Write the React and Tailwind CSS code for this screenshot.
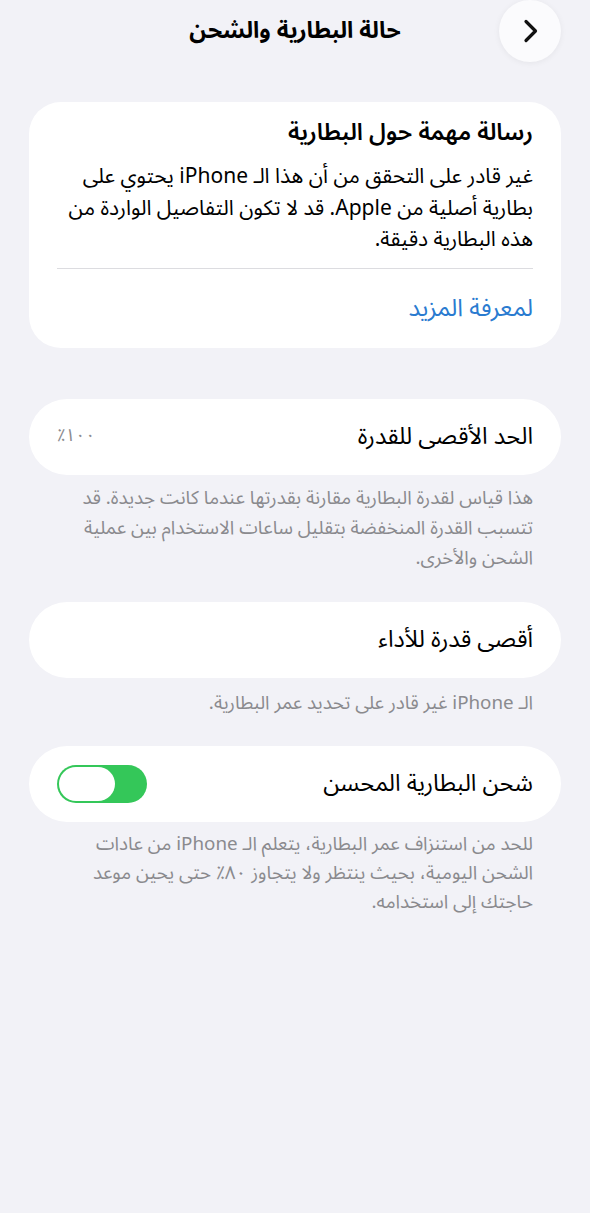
import React from 'react'

const font = { fontFamily: '"Noto Sans Arabic", "DejaVu Sans", "Noto Sans", sans-serif' }

function Header() {
  return (
    <div className="relative flex h-[62px] items-center justify-center">
      <h1 className="text-[23px] font-bold text-black">حالة البطارية والشحن</h1>
      <button className="absolute right-0 top-0 flex h-[62px] w-[62px] items-center justify-center rounded-full bg-[#fbfbfd] shadow-[0_1px_6px_rgba(0,0,0,0.06)]">
        <svg width="22" height="26" viewBox="0 0 22 26" fill="none">
          <path d="M7 3.5 L16.5 13 L7 22.5" stroke="#111" strokeWidth="3.2" strokeLinecap="round" strokeLinejoin="round" />
        </svg>
      </button>
    </div>
  )
}

function Lines({ lines, className }) {
  return (
    <div className={className}>
      {lines.map((l, i) => (
        <div key={i} className="whitespace-nowrap">{l}</div>
      ))}
    </div>
  )
}

function Row({ label, children }) {
  return (
    <div className="flex h-[76px] items-center justify-between rounded-[38px] bg-white px-[28px]">
      <span className="text-[23.5px] text-black">{label}</span>
      {children}
    </div>
  )
}

function Footnote({ lines, className }) {
  return (
    <Lines
      lines={lines}
      className={'px-[28px] text-[18.8px] text-[#8a8a8e] ' + (className || '')}
    />
  )
}

function Toggle() {
  return (
    <div className="flex h-[38px] w-[90px] items-center justify-start rounded-full bg-[#34c759] p-[2px]" dir="ltr">
      <div className="h-[34px] w-[56px] rounded-full bg-white" />
    </div>
  )
}

export default function App() {
  return (
    <div dir="rtl" style={font} className="min-h-screen w-full bg-[#f2f2f7] px-[29px]">
      <Header />

      <div className="mt-[40px] rounded-[32px] bg-white px-[28px] pb-[21px] pt-[13px]">
        <div className="text-[23.5px] font-semibold leading-[36px] text-black">رسالة مهمة حول البطارية</div>
        <Lines
          className="mt-[10px] text-[21px] leading-[31.5px] text-black"
          lines={[
            'غير قادر على التحقق من أن هذا الـ iPhone يحتوي على',
            'بطارية أصلية من Apple. قد لا تكون التفاصيل الواردة من',
            'هذه البطارية دقيقة.',
          ]}
        />
        <div className="mt-[12px] h-px bg-[#dcdce0]" />
        <div className="mt-[22px] text-[24px] leading-[36px] text-[#2a7bd0]">لمعرفة المزيد</div>
      </div>

      <div className="mt-[51px]">
        <Row label="الحد الأقصى للقدرة">
          <span className="text-[17.5px] text-[#8a8a8e]">١٠٠٪</span>
        </Row>
        <Footnote
          className="mt-[8px] leading-[30px]"
          lines={[
            'هذا قياس لقدرة البطارية مقارنة بقدرتها عندما كانت جديدة. قد',
            'تتسبب القدرة المنخفضة بتقليل ساعات الاستخدام بين عملية',
            'الشحن والأخرى.',
          ]}
        />
      </div>

      <div className="mt-[29px]">
        <Row label="أقصى قدرة للأداء" />
        <Footnote className="mt-[10px] leading-[30px]" lines={['الـ iPhone غير قادر على تحديد عمر البطارية.']} />
      </div>

      <div className="mt-[28px]">
        <Row label="شحن البطارية المحسن">
          <Toggle />
        </Row>
        <Footnote
          className="mt-[8px] leading-[29px]"
          lines={[
            'للحد من استنزاف عمر البطارية، يتعلم الـ iPhone من عادات',
            'الشحن اليومية، بحيث ينتظر ولا يتجاوز ٨٠٪ حتى يحين موعد',
            'حاجتك إلى استخدامه.',
          ]}
        />
      </div>
    </div>
  )
}
